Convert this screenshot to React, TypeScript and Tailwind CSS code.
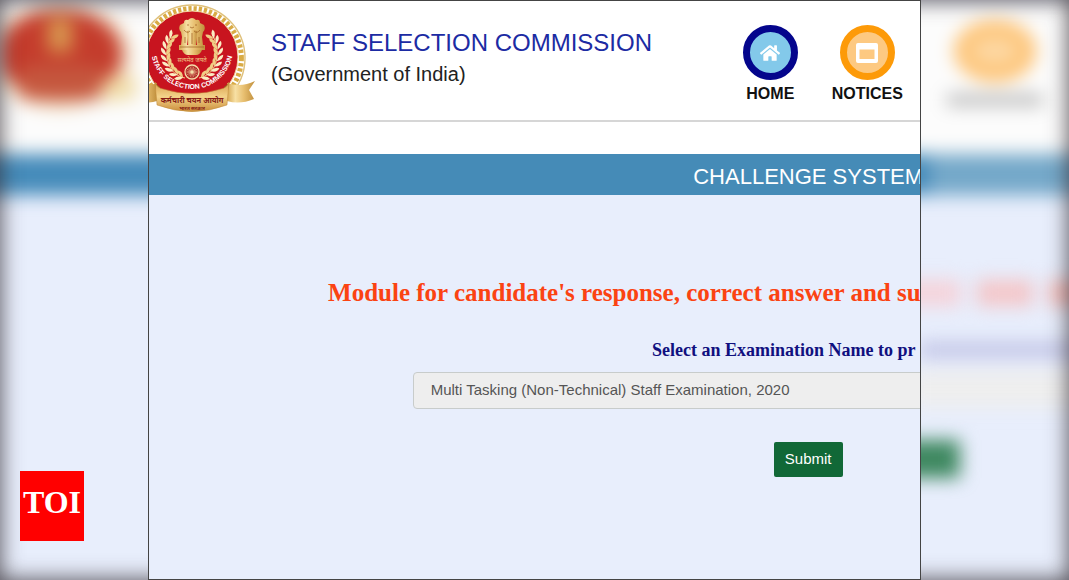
import type { ReactNode } from "react";
import { FaHome } from "react-icons/fa";

const WREATH = [0, 1, 2, 3, 4, 5, 6, 7, 8];

function WreathSide() {
  return (
    <g>
      <path d="M36 77 C20 74 12 56 23 32" fill="none" stroke="#f0cf85" strokeWidth="1" />
      {WREATH.map((i) => {
        const angle = 112 + i * 13;
        const a = (angle * Math.PI) / 180;
        const x = 43 + Math.cos(a) * 26;
        const y = 52 + Math.sin(a) * 26;
        return (
          <g key={i} transform={`translate(${x} ${y}) rotate(${angle + 90})`}>
            <path d="M-1 0 Q2 -6 7 -4.500 Q5 0 -1 0Z" fill="#fbecc4" />
            <path d="M-1 0 Q2 6 7 4.500 Q5 0 -1 0Z" fill="#f0cd85" />
          </g>
        );
      })}
    </g>
  );
}

function Emblem() {
  return (
    <svg className="h-[114px] w-[107px]" viewBox="0 0 107 114" aria-hidden="true">
      <defs>
        <linearGradient id="gold" x1="0" x2="1">
          <stop offset="0" stopColor="#d6a650" />
          <stop offset="0.3" stopColor="#f7e0a4" />
          <stop offset="0.6" stopColor="#e8bf70" />
          <stop offset="1" stopColor="#c08f3c" />
        </linearGradient>
        <linearGradient id="ribbon" x1="0" x2="0" y1="0" y2="1">
          <stop offset="0" stopColor="#d8a04a" />
          <stop offset="0.5" stopColor="#f3d28a" />
          <stop offset="1" stopColor="#cb8f3c" />
        </linearGradient>
        <path id="arc" d="M2 48 A41 40 0 0 0 84 48" />
      </defs>
      <circle cx="43" cy="57" r="53" fill="#fff" stroke="#dfc07a" strokeWidth="1.4" />
      <circle
        cx="43"
        cy="57"
        r="49.4"
        fill="none"
        stroke="#d9ab45"
        strokeWidth="5"
        strokeDasharray="3.2 2"
      />
      <circle cx="43" cy="56" r="46" fill="#c8141f" stroke="#f3d9a0" strokeWidth="1" />
      <WreathSide />
      <g transform="translate(86 0) scale(-1 1)">
        <WreathSide />
      </g>
      <g fill="url(#gold)">
        <path d="M35 22 Q35 18 39 19 Q43 15 47 19 Q51 18 51 22 L55 24 Q57 28 54 31 L53 36 L54 44 H48 L47 36 H39 L38 44 H32 L33 36 L32 31 Q29 28 31 24Z" />
        <path d="M38 30 Q43 27 48 30 L47 44 H39Z" />
        <path d="M30 44 H56 V49 H30Z" />
        <path d="M33 49 H53 Q51 54 47 54 H39 Q35 54 33 49Z" />
      </g>
      <path
        fill="none"
        stroke="#9c5c20"
        strokeWidth="0.7"
        d="M38 24 H40 M46 24 H48 M41 26 Q43 28 45 26 M35 29 Q38 33 41 30 M45 30 Q48 33 51 29 M43 32 V43 M36 36 V42 M50 36 V42 M31 46 H55"
      />
      <text
        x="43"
        y="61"
        textAnchor="middle"
        fontSize="6"
        fill="#f3c987"
        className="font-['Noto_Sans',sans-serif]"
      >
        सत्यमेव जयते
      </text>
      <circle cx="43" cy="71" r="7" fill="#a81518" stroke="#f5deaa" strokeWidth="1.3" />
      {WREATH.map((i) => (
        <path
          key={i}
          d="M43 65 V77"
          stroke="#f5deaa"
          strokeWidth="0.5"
          transform={`rotate(${i * 20} 43 71)`}
        />
      ))}
      <circle cx="43" cy="71" r="1.6" fill="#f5deaa" />
      <text
        fontSize="7"
        fontWeight="bold"
        fill="#fff"
        className="font-['Liberation_Sans',sans-serif]"
      >
        <textPath href="#arc" startOffset="50%" textAnchor="middle">
          STAFF SELECTION COMMISSION
        </textPath>
      </text>
      <path d="M78 82 Q92 87 106 80 L100 89 L105 98 Q91 104 78 100Z" fill="url(#gold)" />
      <path d="M8 82 Q-6 87 -20 80 L-14 89 L-18 98 Q-5 104 8 100Z" fill="url(#gold)" />
      <path d="M80 82 L75 86 L78 97Z M6 82 L11 86 L8 97Z" fill="#8c5a1e" />
      <path
        d="M6 81 Q8 87 14 88 Q43 97 72 88 Q78 87 80 81 L78 104 Q43 117 8 104Z"
        fill="url(#ribbon)"
        stroke="#c08a3a"
        strokeWidth="0.5"
      />
      <text
        x="43"
        y="102"
        textAnchor="middle"
        fontSize="7.5"
        fontWeight="bold"
        fill="#861a14"
        className="font-['Noto_Sans',sans-serif]"
      >
        कर्मचारी चयन आयोग
      </text>
      <text
        x="43"
        y="109"
        textAnchor="middle"
        fontSize="5"
        fontWeight="bold"
        fill="#861a14"
        className="font-['Noto_Sans',sans-serif]"
      >
        भारत सरकार
      </text>
    </svg>
  );
}

function SoftEmblem() {
  return (
    <svg className="h-[120px] w-[148px]" viewBox="0 0 148 120" aria-hidden="true">
      <ellipse cx="60" cy="56" rx="72" ry="54" fill="#f3e3c4" />
      <ellipse cx="60" cy="54" rx="62" ry="45" fill="#c43c2c" />
      <path d="M48 18 H72 V52 H48Z" fill="#d99850" />
      <path d="M22 66 H100 V98 Q60 104 20 98Z" fill="#c5573e" />
      <path d="M104 78 L136 76 V98 L104 102Z" fill="#f0dca6" />
    </svg>
  );
}

function NoticeIcon() {
  return (
    <svg width="22" height="20" viewBox="0 0 22 20" aria-hidden="true">
      <path
        fill="#fff"
        fillRule="evenodd"
        d="M2 0H20Q22 0 22 2V18Q22 20 20 20H2Q0 20 0 18V2Q0 0 2 0ZM3.500 6.500V16H18.500V6.500Z"
      />
    </svg>
  );
}

function NavItem({ label, ring, children }: { label: string; ring: string; children: ReactNode }) {
  return (
    <a href="#" className="flex flex-col items-center gap-1 text-base leading-5 font-bold text-[#111]">
      <span className={`flex size-[55px] items-center justify-center rounded-full border-7 ${ring}`}>
        {children}
      </span>
      {label}
    </a>
  );
}

function Backdrop() {
  return (
    <div aria-hidden="true" className="absolute inset-0 overflow-hidden bg-[#e8eefc]">
      <div className="-mx-5 flex h-full flex-col blur-[9px]">
        <div className="flex h-[154px] items-start justify-between bg-[#fcfcfc] px-5">
          <SoftEmblem />
          <div className="mr-6 flex w-[100px] flex-col items-center gap-3 pt-5">
            <div className="h-[62px] w-[82px] rounded-[50%] border-[16px] border-[#fdc272] bg-[#fdd7a2]" />
            <div className="h-3 w-[96px] bg-[#bcbcbc]" />
          </div>
        </div>
        <div className="flex h-[41px] justify-end bg-[#458bba]">
          <div className="w-[160px] bg-[#74a8c9]" />
        </div>
        <div className="flex flex-col items-end pt-[85px]">
          <div className="flex h-[26px] gap-4">
            <div className="w-16 bg-[#f5d3da]" />
            <div className="w-14 bg-[#f4c6c8]" />
            <div className="w-10 bg-[#f4bcb8]" />
          </div>
          <div className="mt-9 h-4 w-[170px] bg-[#c2c5e6]" />
          <div className="mt-3 h-[38px] w-[180px] bg-[#eeeeee]" />
          <div className="mt-8 mr-[129px] h-[38px] w-[80px] bg-[#3e8860]" />
        </div>
      </div>
      <div className="absolute inset-0 shadow-[inset_0_0_22px_0_rgba(50,45,50,0.85)]" />
    </div>
  );
}

export default function App() {
  return (
    <div className="relative min-h-screen overflow-hidden font-['Liberation_Sans',Arial,sans-serif]">
      <Backdrop />
      <main className="relative mx-auto flex min-h-screen w-[72.3%] flex-col overflow-hidden border border-[#444] bg-[#e8eefc]">
        <header className="flex h-[121px] items-start justify-between border-b-2 border-[#d6d6d6] bg-white">
          <div className="flex gap-[15px]">
            <Emblem />
            <div className="pt-6">
              <h1 className="text-2xl leading-9 whitespace-nowrap text-[#1c2ba3]">
                STAFF SELECTION COMMISSION
              </h1>
              <p className="text-xl leading-[26px] text-[#222]">(Government of India)</p>
            </div>
          </div>
          <nav className="flex gap-[34px] pt-6 pr-[17px]">
            <NavItem label="HOME" ring="border-[#04058c] bg-[#83c9ea]">
              <FaHome className="size-5 text-white" />
            </NavItem>
            <NavItem label="NOTICES" ring="border-[#fd9a08] bg-[#fdc981]">
              <NoticeIcon />
            </NavItem>
          </nav>
        </header>
        <div className="h-8 bg-white" />
        <h2 className="h-[41px] w-[171%] bg-[#458bb7] pt-1 text-center text-[22px] leading-[38px] text-white">
          CHALLENGE SYSTEM
        </h2>
        <form className="flex w-[171%] flex-col items-center" onSubmit={(e) => e.preventDefault()}>
          <h3 className="mt-[82px] self-start pl-[179px] font-['Liberation_Serif',serif] text-[25px] leading-8 font-bold whitespace-nowrap text-[#fb4312]">
            Module for candidate's response, correct answer and su
          </h3>
          <label
            htmlFor="exam"
            className="mt-[29px] self-start pl-[503px] font-['Liberation_Serif',serif] text-lg leading-6 font-bold whitespace-nowrap text-[#10107f]"
          >
            Select an Examination Name to pr
          </label>
          <select
            id="exam"
            className="mt-[10px] h-[37px] w-[60%] appearance-none rounded border border-[#c8cccb] bg-[#eeeeee] px-[17px] text-[15px] text-[#555]"
          >
            <option>Multi Tasking (Non-Technical) Staff Examination, 2020</option>
          </select>
          <button
            type="submit"
            className="mt-[33px] h-[35px] rounded-xs bg-[#116837] px-[11px] text-[15px] text-white"
          >
            Submit
          </button>
        </form>
      </main>
      <div className="absolute bottom-[39px] left-5 flex h-[70px] w-16 items-center justify-center bg-[#ff0000] pb-2 font-['Liberation_Serif',serif] text-[32px] font-bold text-white">
        TOI
      </div>
    </div>
  );
}
